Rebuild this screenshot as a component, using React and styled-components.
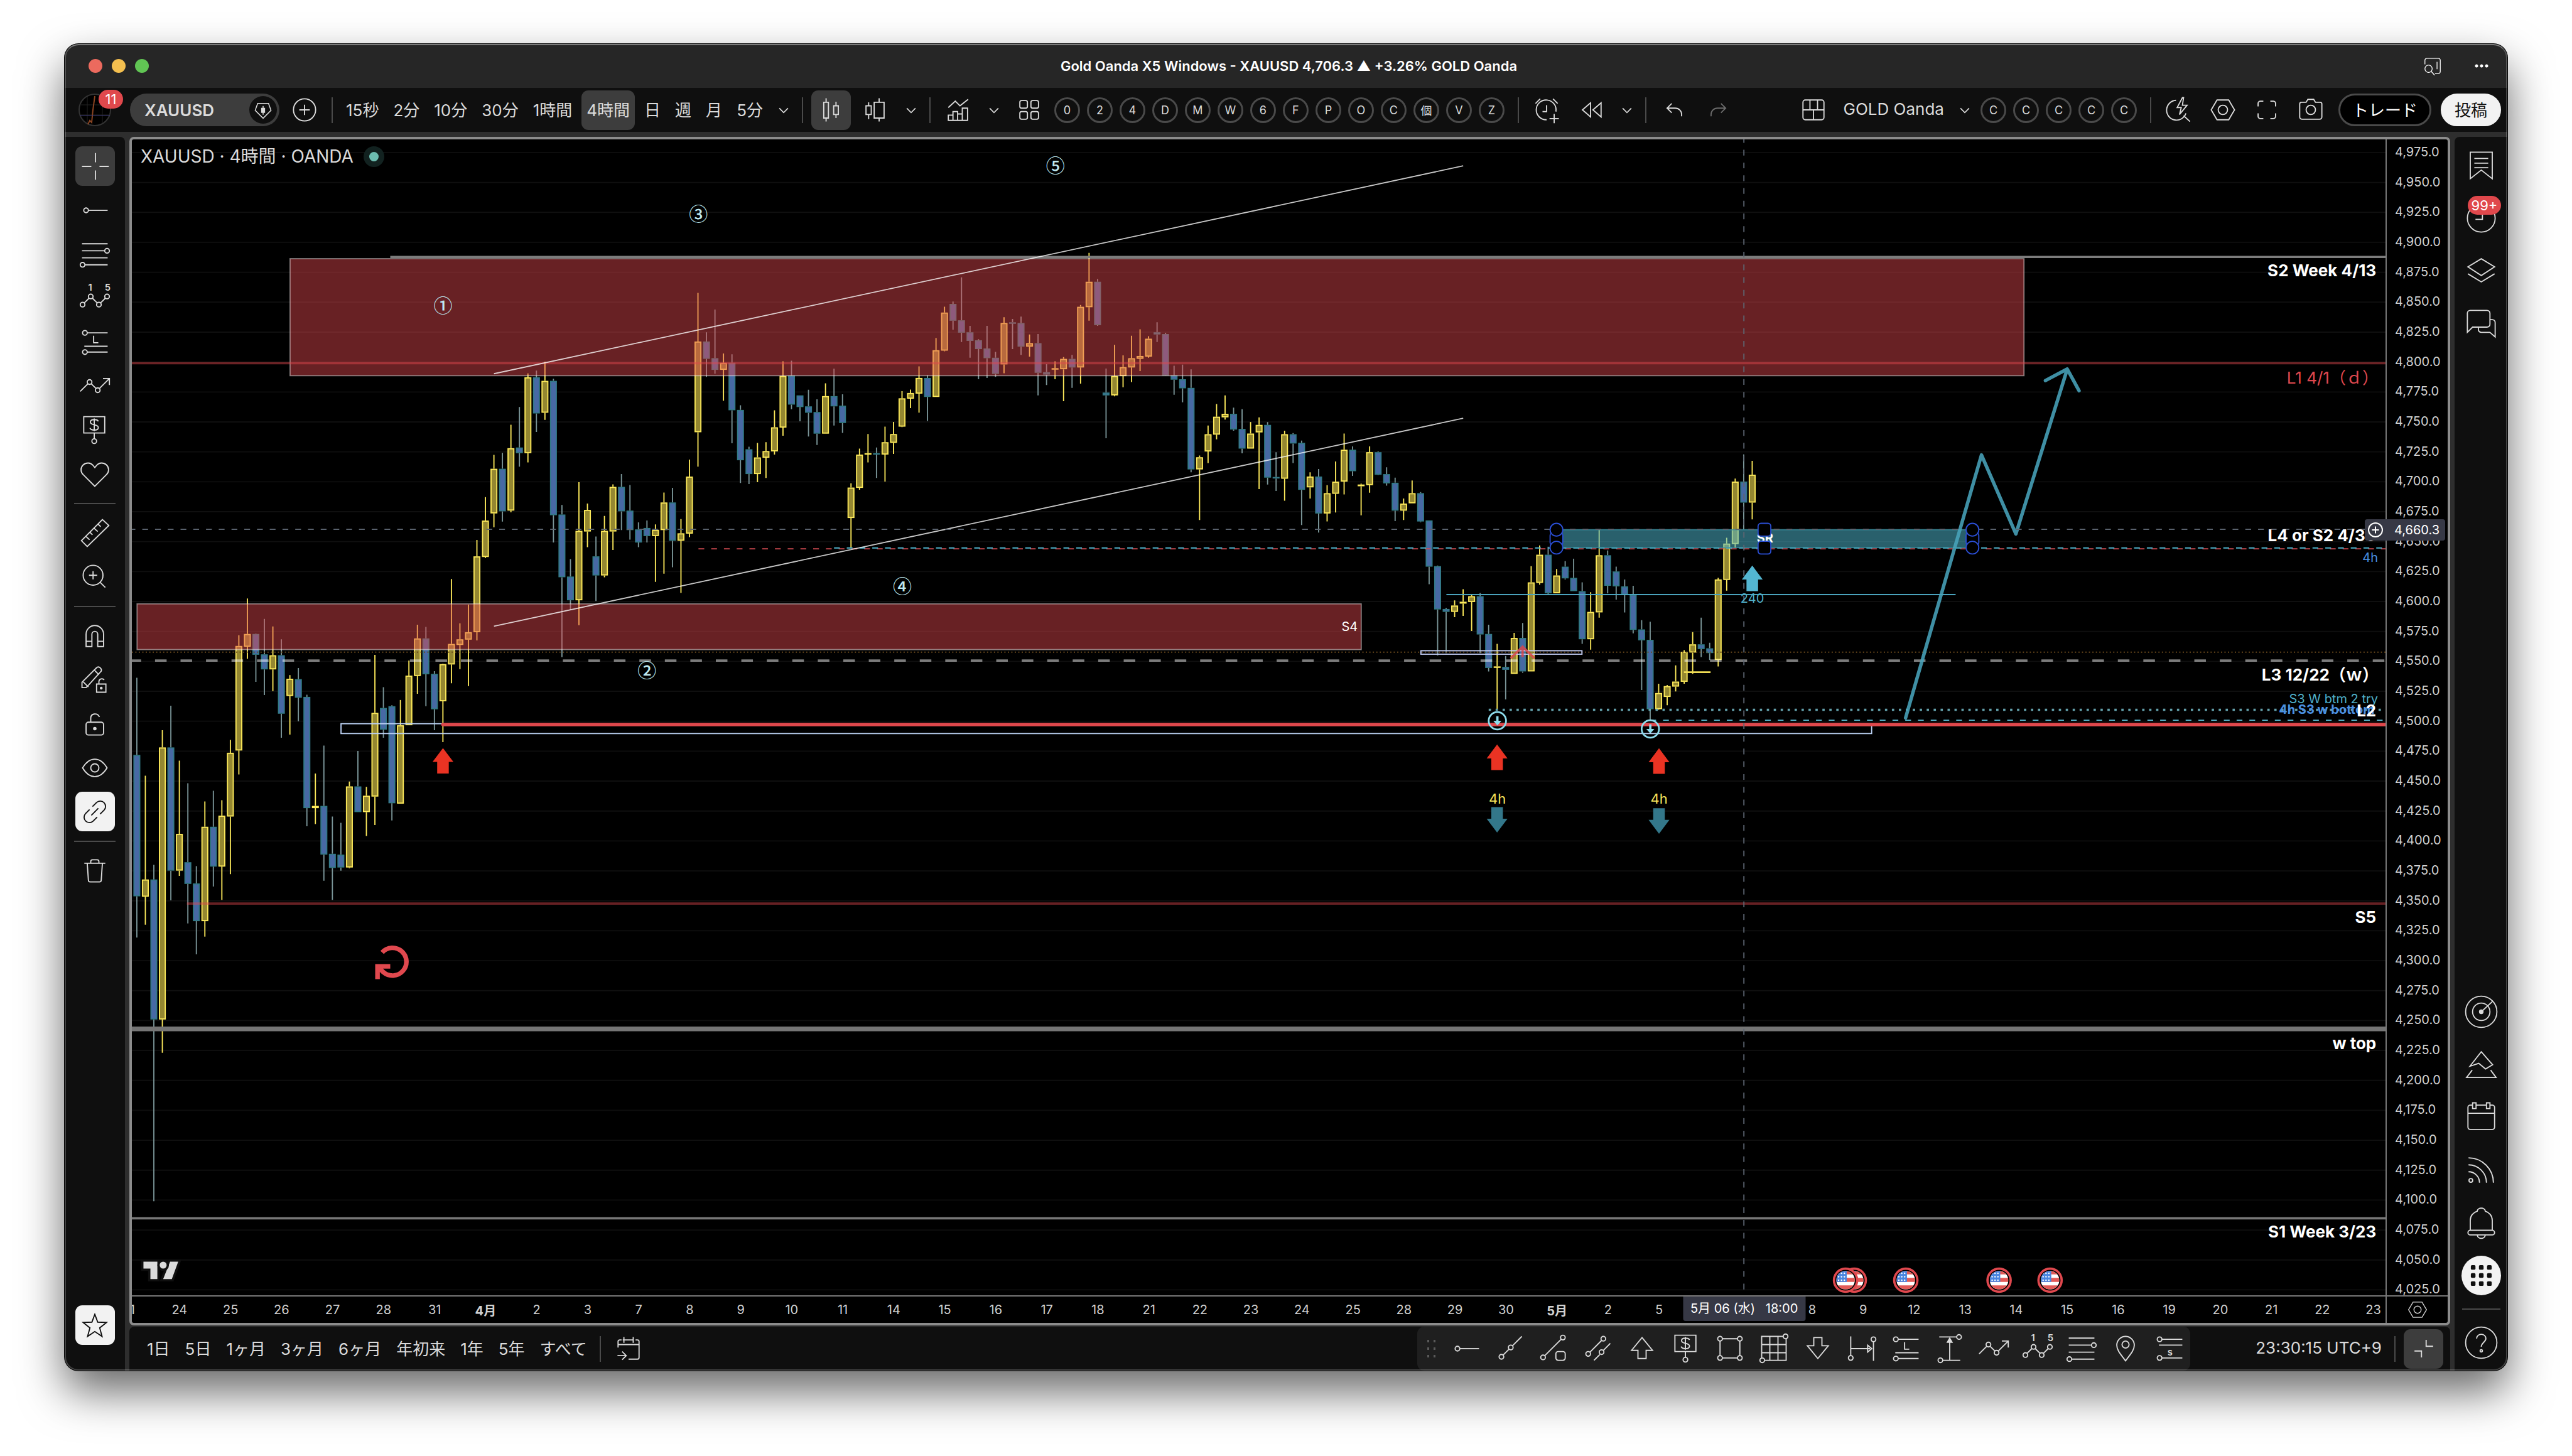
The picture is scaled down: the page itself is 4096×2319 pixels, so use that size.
import React from 'react'
import styled, { createGlobalStyle, css } from 'styled-components'

// ------------ chart geometry ------------ //

const PLOT = { x: 228, y: 240, w: 3890, h: 1996 }
const FIRST_BAR = 236.6
const BAR_STEP = 14.675

const xPct = x => `${((x - PLOT.x) / PLOT.w) * 100}%`
const yPct = y => `${((y - PLOT.y) / PLOT.h) * 100}%`
const priceY = price => 262.7 + (4975 - price) * 2.0674

// each block: [origin, rows per unit, bars]; a bar is [up, high, top, bottom, low]
const blocks = [
  [980, 1.3067, [
    [0, 248, 422, 741, 834], [1, 469, 703, 742, 805], [0, 670, 703, 1019, 1429], [1, 366, 405, 1019, 1094],
    [0, 311, 405, 683, 750], [1, 435, 600, 683, 695], [0, 486, 664, 713, 802], [0, 673, 712, 797, 872],
    [1, 527, 584, 797, 832], [0, 503, 584, 674, 719], [1, 524, 559, 674, 749], [1, 388, 417, 561, 691],
    [1, 152, 176, 412, 466], [1, 69, 149, 178, 205], [0, 148, 149, 196, 257], [0, 115, 195, 229, 287],
    [1, 132, 197, 229, 278], [0, 161, 197, 329, 383], [1, 242, 250, 289, 376], [0, 226, 251, 293, 346],
    [0, 286, 291, 542, 583], [1, 464, 537, 542, 578], [0, 401, 537, 647, 706], [0, 561, 645, 677, 749],
    [0, 575, 647, 676, 683], [1, 482, 493, 676, 678], [0, 413, 493, 551, 551], [1, 494, 514, 551, 605],
    [1, 196, 327, 516, 580], [0, 269, 316, 365, 383], [0, 310, 312, 531, 570], [1, 298, 355, 532, 532],
    [1, 209, 243, 355, 355], [1, 128, 159, 244, 284], [0, 133, 159, 240, 312], [0, 233, 239, 319, 366],
    [1, 216, 217, 301, 393],
  ]],
  [420, 1.6333, [
    [1, 946, 1129, 1187, 1240], [1, 1071, 1116, 1132, 1200], [1, 1018, 1096, 1117, 1248], [1, 836, 882, 1096, 1119],
    [1, 715, 781, 884, 887], [1, 596, 635, 761, 800], [0, 590, 635, 755, 784], [1, 511, 577, 753, 758],
    [0, 461, 575, 591, 629], [1, 366, 377, 591, 617], [0, 358, 377, 479, 531], [1, 333, 387, 477, 497],
    [0, 381, 387, 766, 843], [0, 737, 764, 941, 1166], [0, 890, 939, 1006, 1033], [1, 673, 810, 1006, 1076],
    [1, 733, 751, 812, 856], [0, 826, 882, 936, 1008], [1, 768, 810, 936, 941], [1, 679, 686, 812, 864],
    [0, 650, 686, 755, 808], [0, 681, 753, 808, 835], [0, 786, 806, 843, 856], [0, 781, 802, 825, 843],
    [1, 792, 807, 825, 954], [1, 702, 730, 808, 931], [0, 689, 730, 838, 913], [1, 777, 817, 838, 985],
    [1, 609, 657, 818, 828], [1, 139, 276, 532, 629], [0, 250, 276, 325, 376], [0, 186, 323, 356, 367],
    [1, 310, 336, 356, 443], [0, 312, 336, 470, 563], [0, 456, 469, 611, 675], [0, 573, 580, 650, 678],
    [1, 562, 603, 650, 673], [1, 560, 585, 604, 661], [1, 470, 518, 586, 595], [1, 332, 373, 519, 542],
    [0, 330, 372, 454, 467], [0, 428, 428, 461, 501], [0, 412, 459, 477, 544], [0, 439, 475, 536, 568],
    [1, 394, 430, 536, 536], [0, 353, 430, 459, 513], [0, 425, 457, 506, 534], [1, 676, 688, 774, 858],
    [1, 578, 595, 689, 694], [1, 537, 591, 595, 617], [0, 575, 591, 595, 661], [1, 516, 560, 595, 671],
    [1, 503, 537, 562, 593],
  ]],
  [420, 2.6133, [
    [1, 666, 698, 826, 828], [1, 659, 674, 700, 742], [1, 554, 606, 677, 763], [0, 594, 606, 692, 800],
    [1, 426, 481, 692, 692], [1, 285, 311, 483, 486], [0, 261, 272, 348, 389], [0, 152, 346, 402, 444],
    [0, 371, 400, 439, 515], [0, 431, 436, 476, 612], [0, 371, 473, 517, 606], [0, 489, 515, 588, 601],
    [1, 332, 358, 545, 585], [0, 340, 355, 360, 476], [0, 329, 358, 465, 502], [1, 410, 449, 465, 510],
    [0, 408, 449, 583, 685], [0, 544, 580, 591, 638], [1, 531, 562, 567, 612], [1, 512, 520, 567, 711],
    [0, 502, 520, 559, 651], [1, 277, 285, 559, 632], [1, 42, 172, 287, 348], [0, 159, 172, 368, 371],
    [0, 564, 672, 685, 878], [1, 457, 597, 685, 689], [1, 504, 557, 598, 648], [1, 416, 517, 559, 625],
    [1, 387, 507, 520, 575], [1, 418, 429, 510, 515], [0, 355, 400, 410, 444], [0, 402, 408, 596, 597],
    [0, 551, 594, 614, 682], [0, 546, 612, 653, 716], [0, 567, 651, 1019, 1032], [1, 956, 964, 1019, 1247],
    [1, 821, 860, 938, 990], [1, 724, 781, 862, 883], [1, 685, 768, 784, 794], [0, 740, 768, 839, 844],
    [0, 747, 836, 925, 946], [1, 805, 857, 925, 925], [1, 784, 818, 852, 1108], [0, 805, 818, 1056, 1087],
    [0, 941, 1053, 1060, 1116], [1, 844, 860, 1061, 1160], [0, 855, 860, 902, 990], [0, 889, 899, 1111, 1270],
    [1, 1032, 1051, 1100, 1150], [0, 1017, 1051, 1218, 1304], [1, 1090, 1126, 1218, 1254], [1, 983, 1074, 1129, 1213],
    [1, 857, 930, 1074, 1132], [0, 915, 930, 1027, 1048], [1, 1083, 1087, 1095, 1226], [1, 915, 941, 1090, 1124],
    [0, 938, 941, 1043, 1045], [0, 1009, 1040, 1082, 1092], [0, 1056, 1079, 1205, 1252], [1, 1150, 1173, 1205, 1247],
    [1, 1069, 1126, 1172, 1172], [0, 1121, 1126, 1254, 1257],
  ]],
  [740, 2.1778, [
    [0, 344, 344, 518, 584], [0, 514, 516, 679, 852], [0, 673, 677, 688, 843], [1, 645, 664, 688, 708],
    [1, 603, 650, 657, 703], [1, 625, 629, 651, 760], [0, 617, 629, 773, 843], [0, 736, 771, 899, 912],
    [1, 808, 893, 897, 1054], [0, 854, 895, 906, 1017], [1, 767, 786, 921, 921], [0, 730, 786, 912, 917],
    [1, 516, 577, 912, 912], [1, 438, 473, 579, 586], [0, 443, 473, 618, 623], [1, 527, 551, 618, 618],
    [0, 497, 518, 562, 566], [0, 488, 560, 610, 610], [0, 577, 610, 791, 808], [1, 614, 688, 791, 830],
    [1, 378, 475, 690, 710], [0, 457, 475, 590, 618], [0, 518, 536, 592, 642], [0, 566, 592, 624, 690],
    [0, 590, 623, 756, 769], [0, 719, 754, 795, 982], [0, 725, 793, 1054, 1096], [1, 958, 993, 1054, 1056],
    [1, 963, 967, 1008, 1039], [1, 889, 950, 969, 987], [1, 832, 838, 951, 958], [1, 764, 810, 841, 921],
    [0, 710, 810, 828, 858], [0, 804, 825, 843, 869], [1, 560, 566, 869, 893], [1, 409, 431, 568, 608],
    [1, 187, 198, 433, 448], [0, 96, 198, 277, 378], [1, 120, 172, 277, 340],
  ]],
]

const candles = blocks
  .flatMap(([origin, rows, bars]) =>
    bars.map(([up, ...ys]) => [up, ...ys.map(v => origin + v / rows)])
  )
  .map(([up, high, top, bottom, low], i) => ({
    up,
    high,
    top,
    bottom,
    low,
    x: FIRST_BAR + i * BAR_STEP,
  }))

const prices = Array.from({ length: 39 }, (_, i) => 4975 - i * 25)
const formatPrice = p => p.toLocaleString('en-US', { minimumFractionDigits: 1 })

// '-' is a tick without a label
const days = (
  '21 24 25 26 27 28 31 4月 2 3 7 8 9 10 11 14 15 16 17 18 21 22 23 24 25 ' +
  '28 29 30 5月 2 5 - - 8 9 12 13 14 15 16 19 20 21 22 23'
).split(' ')

// ------------ icons ------------ //

const dot = (x, y, r = 2) => <circle cx={x} cy={y} r={r} />

const waveShape = (
  <>
    <path d="M5 18l4-4M12 14l4 4M19 18l4-4" />
    {dot(3.5, 19.5)}
    {dot(10.5, 12.5)}
    {dot(17.5, 19.5)}
    {dot(24.5, 12.5)}
    <IconText x="10" y="7.5">1</IconText>
    <IconText x="25" y="7.5">5</IconText>
  </>
)

const priceNoteShape = (
  <>
    <path d="M4.5 2.5h18v14h-18zM13.5 16.5v5" />
    {dot(13.5, 23.5)}
    <path d="M17 6.500c-.500-1-1.800-1.500-3.500-1.500-2 0-3.300.800-3.300 2.200 0 3.200 6.800 1.300 6.800 4.600 0 1.500-1.500 2.200-3.500 2.200-1.800 0-3.200-.600-3.700-1.800M13.500 4v11" />
  </>
)

const icons = {
  cross: <path d="M14.500 2.500v8M14.500 17.500v8M3 14h8M18 14h8" />,
  ray: <>{dot(6.5, 14)}<path d="M8.500 14H25" /></>,
  fib: (
    <>
      <path d="M3 5h22M3 11h19.500M3 17h22M5.500 23H25" />
      {dot(24.5, 11)}
      {dot(3.5, 23)}
    </>
  ),
  wave: waveShape,
  longPos: (
    <>
      {dot(5.5, 6)}
      {dot(5.5, 22.5)}
      <path d="M7.500 6H25M5 17.500h20M7.500 22.500H25M13 8.500v6h4" />
    </>
  ),
  shortPos: (
    <>
      {dot(5.5, 6)}
      {dot(5.5, 22)}
      <path d="M7.500 6H25M5 11h20M7.500 22H25" />
      <IconText x="14.5" y="20">s</IconText>
    </>
  ),
  path: (
    <>
      <path d="M1.500 18.500l6.500-6.500M11 12l4 4M18 16l8.500-8.500M21 7.500h5.500V13" />
      {dot(9.5, 10.5)}
      {dot(16.5, 17.5)}
    </>
  ),
  note: priceNoteShape,
  heart: (
    <path d="M14 24.500L4 14.500C1.500 12 1.700 8.300 4 6.200c2.600-2.400 6.500-2 8.500.4L14 8.500l1.500-1.900c2-2.400 5.900-2.800 8.500-.4 2.300 2.100 2.500 5.800 0 8.300z" />
  ),
  ruler: (
    <path d="M2.500 20.500L20.500 2.500l5.500 5-18.500 18zM6.500 17l3 2.700M10 13.500l2 2M13.500 10l3 2.700M17 6.500l2 2" />
  ),
  zoom: (
    <>
      {dot(12.5, 12.5, 8.5)}
      <path d="M18.500 18.500l4.500 4.500M9 12.500h7M12.500 9v7" />
    </>
  ),
  magnet: (
    <path d="M6.500 23V12.500a7.500 7.500 0 0 1 15 0V23h-5V12.500a2.500 2.500 0 0 0-5 0V23zM6.500 18.500h5M16.500 18.500h5" />
  ),
  pencilLock: (
    <>
      <path d="M3 20.500v-4.500L15.500 3.500a2 2 0 0 1 3 0l.5.500a2 2 0 0 1 0 3L9 18l-2.500 2.500zM4 15.500l4.500 4.500M13.500 5.500l4 4" />
      <path d="M15.500 17.500h8v7h-8zM17.500 17.500v-2a2.500 2.500 0 0 1 4.500-1.500" />
      <circle cx="19.500" cy="21" r=".7" fill="currentColor" />
    </>
  ),
  lock: (
    <>
      <rect x="6.500" y="12.500" width="15" height="11" rx="2" />
      <path d="M10.500 12.500V9c0-4 5.500-5 7.500-1" />
      <circle cx="14" cy="18" r="1" fill="currentColor" />
    </>
  ),
  eye: (
    <>
      <path d="M3.500 14C6.500 9 10 6.500 14 6.500S21.500 9 24.500 14C21.500 19 18 21.500 14 21.500S6.500 19 3.500 14z" />
      {dot(14, 14, 3.5)}
    </>
  ),
  link: (
    <path d="M9.500 12L6 15.500a4.600 4.600 0 0 0 6.500 6.500l3.500-3.500M12 9.500L15.500 6A4.600 4.600 0 0 1 22 12.500L18.500 16M11 17l6-6" />
  ),
  trash: (
    <path d="M5 7.500h18M10.500 7.500v-1.500c0-1 .8-1.500 1.500-1.500h4c.7 0 1.500.5 1.500 1.500v1.500M7.500 7.500l1 14.500c0 1 .8 1.500 1.500 1.500h8c.7 0 1.500-.5 1.500-1.500l1-14.500" />
  ),
  star: (
    <path d="M14 4.500l2.500 6.700 7.500.3-5.800 4.600 2 7.400-6.200-4.200-6.200 4.200 2-7.400L4 11.500l7.500-.3z" />
  ),
  nib: (
    <>
      <path d="M8.500 7.500h11l2.500 7-8 8-8-8z" />
      <path d="M14 10v9M12.500 12.500h3v4h-3z" fill="currentColor" />
    </>
  ),
  add: <>{dot(14, 14, 9.5)}<path d="M14 9.500v9M9.500 14h9" /></>,
  chevron: <path d="M10 12.500l4 4 4-4" />,
  candles: (
    <path d="M8 7.500h4v13.500H8zM10 4v3.500M10 21v3M16.500 10.500h4v7.500h-4zM18.500 7v3.500M18.500 18v3" />
  ),
  candlesAlt: (
    <path d="M6 10.500h4.500v7.500H6zM8.250 7.500v3M8.250 18v4M13 7.500h8.500v13.500H13zM17.250 4v3.500M17.250 21v3" />
  ),
  indicators: (
    <path d="M5.500 12l6-5.500 4 4 7-5.500M5.500 18.500h4v4.500h-4zM9.500 18.500v-3h4v7.500h-4M13.500 17.500h4v5.500h-4M17.500 12.500h4.500V23h-4.500z" />
  ),
  tiles: (
    <>
      <rect x="6" y="6" width="6.500" height="6.500" rx="1.500" />
      <rect x="15.500" y="6" width="6.500" height="6.500" rx="1.500" />
      <rect x="6" y="15.500" width="6.500" height="6.500" rx="1.500" />
      <rect x="15.500" y="15.500" width="6.500" height="6.500" rx="1.500" />
    </>
  ),
  alarm: (
    <path d="M14 22.500a8.500 8.500 0 1 1 8-7M4.500 8.500l4-4M23.500 8.500l-4-4M14 10v5.500h-3.500M20.500 17.500v8M16.500 21.500h8" />
  ),
  replay: <path d="M13.500 8v12L6.500 14zM22.500 8v12L15.500 14z" />,
  undo: <path d="M12 8.500l-4 4 4 4M8 12.500h7a5.500 5.500 0 0 1 5.500 5.500v1.500" />,
  redo: <path d="M16 8.500l4 4-4 4M20 12.500h-7A5.500 5.500 0 0 0 7.500 18v1.500" />,
  layout: (
    <>
      <rect x="5" y="5.500" width="18" height="17" rx="2" />
      <path d="M5 14h18M11 5.500V14M17.500 5.500V14M14 14v8.500" />
    </>
  ),
  flash: (
    <path d="M11.500 5.800A8.500 8.500 0 1 0 20 17M18 19l5.500 5M17 3.500l-4.500 8.500h3.500l-1.500 6 6.500-8h-4l1-6.500z" />
  ),
  hex: <><path d="M9 5.500h10l5 8.500-5 8.500H9L4 14z" />{dot(14, 14, 4)}</>,
  full: (
    <path d="M6.500 11V8.500a2 2 0 0 1 2-2H11M17 6.500h2.500a2 2 0 0 1 2 2V11M21.500 17v2.500a2 2 0 0 1-2 2H17M11 21.500H8.500a2 2 0 0 1-2-2V17" />
  ),
  camera: (
    <>
      <path d="M6 7.500h4l1.500-2.500h5l1.500 2.500h4A1.500 1.500 0 0 1 23.500 9v11a2 2 0 0 1-2 2h-15a2 2 0 0 1-2-2V9A1.500 1.500 0 0 1 6 7.500z" />
      {dot(14, 14, 4)}
    </>
  ),
  range: (
    <path d="M8 6.500H6.500a1.500 1.500 0 0 0-1.500 1.500v5M20 6.500h1.500a1.500 1.500 0 0 1 1.500 1.500v13.500a1.500 1.500 0 0 1-1.500 1.500H14M5 10.500h18M10 4v5M18 4v5M9 6.500h9M4.500 20h7M8.500 16.500l3.500 3.500-3.500 3.500" />
  ),
  trend: <>{dot(6.5, 21)}{dot(14.5, 13)}<path d="M8 19.500l5-5M16 11.500l8-8" /></>,
  trendBox: (
    <>
      {dot(4.5, 21.5)}
      {dot(21.5, 4.5)}
      <path d="M6 20L20 6" />
      <rect x="15.500" y="16.500" width="8" height="7.500" rx="2" />
    </>
  ),
  channel: (
    <>
      {dot(5.5, 18.5)}
      {dot(18.5, 5.5)}
      {dot(17, 17)}
      <path d="M7 17L17 7M10.500 24l5-5M18.500 15.500l6-6" />
    </>
  ),
  arrowUp: <path d="M14 4.500l9 11h-5.500V22.500h-7v-7H5z" />,
  arrowDown: <path d="M14 22.500l9-11h-5.500V4.500h-7v7H5z" />,
  rect: (
    <>
      <path d="M7.500 5.500h13M7.500 22h13M5.500 7.500V20M22.500 7.500V20" />
      {dot(5.5, 5.5)}
      {dot(22.5, 5.5)}
      {dot(5.5, 22)}
      {dot(22.5, 22)}
    </>
  ),
  mesh: (
    <>
      <path d="M3.500 22V3.500H22M24.500 5.500V24H6M10.500 3.500V24M17.500 3.500V24M3.500 10.500h21M3.500 17.500h21" />
      {dot(24, 3.5)}
      {dot(4, 24)}
    </>
  ),
  dateRange: (
    <>
      <path d="M4.500 3.500v16.500M24 8v16.500M4.500 14H21M19 11l3.500 3-3.500 3z" />
      {dot(4.5, 22)}
      {dot(24, 6)}
    </>
  ),
  priceRange: (
    <>
      <path d="M5 4h15M8 24h15M14 24V7" />
      <path d="M12 8.500L14 5l2 3.500z" fill="currentColor" />
      {dot(22, 4)}
      {dot(6, 24)}
    </>
  ),
  pin: (
    <>
      <path d="M14 24.500c-4-5.500-7.500-9-7.500-13.500a7.500 7.500 0 0 1 15 0c0 4.500-3.500 8-7.500 13.500z" />
      {dot(14, 10.5, 3)}
    </>
  ),
  collapse: <path d="M16 6.500V12h6M6 16h6v5.500" />,
  tab: (
    <path d="M4.500 12V7a2.500 2.500 0 0 1 2.500-2.500h14A2.500 2.500 0 0 1 23.500 7v14a2.500 2.500 0 0 1-2.500 2.500h-4M19.500 9v9M9 22a4.500 4.500 0 1 1 0-9 4.500 4.500 0 0 1 0 9zM12.500 21l4 4.500" />
  ),
}

// right side icons use a 32 unit box
const sideIcons = {
  list: (
    <path d="M6.500 4.500h19v23L16 20l-9.500 7.500zM10 10h12M10 14h12M10 18h12" />
  ),
  clock: <>{dot(16, 16, 12)}<path d="M17 9v8h-6" /></>,
  layers: <path d="M16 5.500l11.500 7L16 20 4.500 12.500zM4.500 18.500L16 25.500l11.500-7" />,
  chat: (
    <path d="M6.500 4.500h14.500a2.500 2.500 0 0 1 2.500 2.500v9.500a2.500 2.500 0 0 1-2.500 2.500H8.500L4 23.500V7a2.500 2.500 0 0 1 2.500-2.500zM13.500 19v2a2.500 2.500 0 0 0 2.500 2.500h7.500l4.500 4V15a2.500 2.500 0 0 0-2.500-2.500h-2" />
  ),
  radar: (
    <>
      {dot(16, 16, 13.5)}
      {dot(16, 16, 7.5)}
      <circle cx="16" cy="16" r="1.500" fill="currentColor" />
      <path d="M16 16l9.800-9" />
    </>
  ),
  peaks: (
    <path d="M6.200 17.500L16 5l9.800 11.200-6.100 3.600L13.800 15zM8.200 20.800l-4.900 6.400h25.500l-4.700-6.400" />
  ),
  calendar: (
    <path d="M8 5.500H6.500a2 2 0 0 0-2 2v17a2 2 0 0 0 2 2h19a2 2 0 0 0 2-2v-17a2 2 0 0 0-2-2H24M12 5.500h8M4.500 12.500h23M8.500 3.500h3v5h-3zM20.500 3.500h3v5h-3z" />
  ),
  feed: (
    <>
      <path d="M5 5.500A21.500 21.500 0 0 1 26.500 27M5 11.500A15.500 15.500 0 0 1 20.500 27M5 17.500A9.500 9.500 0 0 1 14.500 27" />
      {dot(7, 25, 1.6)}
    </>
  ),
  bell: (
    <path d="M6.500 22.500V14c0-4 2.500-7 6-8 .3-3.500 6.700-3.500 7 0 3.500 1 6 4 6 8v8.500M6.500 22.500h19a2 2 0 0 1 0 4h-19a2 2 0 0 1 0-4zM12.500 26.500c.5 4 6.500 4 7 0" />
  ),
  apps: (
    <g fill="currentColor" stroke="none">
      {[7, 14, 21].flatMap(y =>
        [7, 14, 21].map(x => (
          <rect key={`${x}-${y}`} x={x} y={y} width="4" height="4" rx="1" />
        ))
      )}
    </g>
  ),
  help: (
    <>
      {dot(16, 16, 13.5)}
      <path d="M12 12.500c0-5 8-5 8 0 0 3-4 3.500-4 7" />
      {dot(16, 23, 1)}
    </>
  ),
}

function IconText({ x, y, children }) {
  return (
    <text x={x} y={y} fontSize="8" fontWeight="600" textAnchor="middle" fill="currentColor" stroke="none">
      {children}
    </text>
  )
}

const Icon = ({ name, size = 52 }) => (
  <Glyph viewBox="0 0 28 28" width={size} height={size} aria-hidden="true">
    {icons[name]}
  </Glyph>
)

const SideIcon = ({ name }) => (
  <Glyph viewBox="0 0 32 32" width="59" height="59" aria-hidden="true">
    {sideIcons[name]}
  </Glyph>
)

// ------------ chart drawing ------------ //

const HLine = ({ y, from = 228, to = 4118, ...rest }) => (
  <line x1={from} x2={to} y1={y} y2={y} {...rest} />
)

const Candle = ({ c }) => (
  <g>
    <path
      d={`M${c.x} ${c.high}V${c.top}M${c.x} ${c.bottom}V${c.low}`}
      stroke={c.up ? '#fdea5b' : '#7b9699'}
      strokeWidth="2"
    />
    <rect
      x={c.x - 5}
      y={c.top + 1}
      width="10"
      height={Math.max(c.bottom - c.top - 2, 0.6)}
      fill={c.up ? '#948731' : '#4769a4'}
      stroke={c.up ? '#fdea5b' : '#327a86'}
      strokeWidth="2"
    />
  </g>
)

const BlockArrow = ({ x, y, color, down }) => (
  <path
    d={
      down
        ? `M${x} ${y + 44}l18-24h-8v-20h-20v20h-8z`
        : `M${x} ${y}l18 24h-8v20h-20v-20h-8z`
    }
    fill={color}
  />
)

const CircleArrow = ({ x, y }) => (
  <g stroke="#8edcec" strokeWidth="3" fill="none">
    <circle cx={x} cy={y} r="15" />
    <path d={`M${x} ${y - 8}v9`} strokeWidth="4" />
    <path d={`M${x - 7} ${y}h14l-7 8z`} fill="#8edcec" stroke="none" />
  </g>
)

const Flag = ({ x }) => (
  <g>
    <circle cx={x} cy="2210" r="20" fill="#000" stroke="#e0484e" strokeWidth="4" />
    <g clipPath="url(#flagClip)" transform={`translate(${x} 2210)`}>
      <rect x="-16" y="-16" width="32" height="32" fill="#fff" />
      <path d="M-16-16h32v6h-32zM-16-4h32v7h-32zM-16 9h32v7h-32z" fill="#e25a57" />
      <rect x="-16" y="-16" width="18" height="19" fill="#4a86e0" />
      <g fill="#fff">
        {[-11, -5, 1].flatMap(sy =>
          [-12, -7, -2].map(sx => <circle key={`${sx}${sy}`} cx={sx} cy={sy - 1} r="1.300" />)
        )}
      </g>
    </g>
  </g>
)

const Zone = props => (
  <rect fill="rgba(226,72,78,0.46)" stroke="rgba(255,255,255,0.45)" strokeWidth="2" {...props} />
)

const corner = { r: 11, fill: '#000', stroke: '#2b4fd6', strokeWidth: 2 }
const knob = { width: 22, height: 22, rx: 5, fill: '#000', stroke: '#2b4fd6', strokeWidth: 2 }

const Drawings = () => (
  <Canvas viewBox={`${PLOT.x} ${PLOT.y} ${PLOT.w} ${PLOT.h}`} preserveAspectRatio="none" aria-hidden="true">
    <defs>
      <clipPath id="flagClip">
        <circle r="16" />
      </clipPath>
    </defs>
    {prices.map(p => (
      <HLine key={p} y={priceY(p)} stroke="#0f0f0f" strokeWidth="2" />
    ))}

    {candles.map(c => (
      <Candle key={c.x} c={c} />
    ))}

    {/* levels */}
    <HLine y={443} from={674} stroke="#7c7c7c" strokeWidth="4" />
    <HLine y={1776} stroke="#757575" strokeWidth="8" />
    <HLine y={2103} stroke="#777" strokeWidth="4" />
    <Zone x="501" y="446" width="2993" height="202" />
    <Zone x="237" y="1042" width="2113" height="79" />
    <HLine y={626.5} stroke="#e2484e" strokeOpacity=".48" strokeWidth="4" />
    <HLine y={1559.5} from={323} stroke="#e2484e" strokeOpacity=".45" strokeWidth="4" />
    <HLine y={1125.5} stroke="#6b4a1c" strokeWidth="2" strokeDasharray="2 4" />
    <HLine y={1140} from={224} stroke="#fff" strokeOpacity=".48" strokeWidth="4" strokeDasharray="20 24" />
    <HLine y={947} from={1206} stroke="#ce4a50" strokeWidth="2" strokeDasharray="10 12" />
    <HLine y={945.5} from={1440} stroke="#4fb3cc" strokeWidth="2" strokeDasharray="10 12" />
    <path d="M853 644.700L2526 285.700M853 1080.600L2526 721.600" stroke="#fff" strokeOpacity=".78" strokeWidth="2" />
    <rect x="589" y="1249" width="2642" height="17" fill="none" stroke="#bcd2f5" strokeWidth="2" />
    <HLine y={1250.5} from={765} stroke="#e0484c" strokeWidth="6" strokeLinecap="round" />
    <rect x="2453" y="1123" width="278" height="6" fill="none" stroke="#c3cdf5" strokeWidth="2" />
    <path d="M2608 1136l20.500-20 20.500 20M2628.500 1116v18" stroke="#d8484e" strokeOpacity=".85" strokeWidth="4" fill="none" />
    <HLine y={1160} from={2907} to={2953} stroke="#f0dd55" strokeWidth="3" />
    <HLine y={1225} from={2570} stroke="#63a0ab" strokeWidth="4" strokeDasharray="4 8" />
    <HLine y={1243} from={2849} stroke="#55b4cc" strokeWidth="2" strokeDasharray="10 12" />
    <HLine y={1026} from={2497} to={3376} stroke="#4aa3bd" strokeWidth="2" />

    {/* selected box */}
    <rect x="2687" y="914" width="718" height="31" fill="#4fb9d0" fillOpacity=".52" stroke="#3d93a4" strokeOpacity=".8" strokeWidth="2" />
    <path
      d="M3289.600 1239L3420.600 785 3480 921.300 3568.600 637M3531 656.500l37.600-20 20.400 37.500"
      fill="none"
      stroke="#48a3bb"
      strokeOpacity=".88"
      strokeWidth="6"
      strokeLinecap="round"
      strokeLinejoin="round"
    />

    {/* markers */}
    <BlockArrow x={765} y={1291} color="#ea3323" />
    <BlockArrow x={2584.5} y={1285} color="#ea3323" />
    <BlockArrow x={2864} y={1291.5} color="#ea3323" />
    <BlockArrow x={3025} y={976} color="#53b6d2" />
    <BlockArrow x={2584.5} y={1393} color="#33778a" down />
    <BlockArrow x={2864} y={1395} color="#33778a" down />
    <CircleArrow x={2585} y={1244} />
    <CircleArrow x={2849} y={1258} />
    <path
      d="M660 1644a24 24 0 1 1 2 34l-9-9M674 1668h-22v22"
      fill="none"
      stroke="#e0484e"
      strokeWidth="8"
    />

    {/* crosshair */}
    <HLine y={913.5} from={224} stroke="#5d6672" strokeWidth="2" strokeDasharray="10 12" />
    <line x1="3010.500" x2="3010.500" y1="236" y2="2236" stroke="#5d6672" strokeWidth="2" strokeDasharray="10 12" />

    {[3201, 3186, 3290, 3451, 3539].map(x => (
      <Flag key={x} x={x} />
    ))}
    <g fill="#dbdbdb" stroke="#0f0f0f" strokeWidth="8" paintOrder="stroke">
      <path d="M248 2178h24v30h-12v-18h-12zM294 2178h14l-11 30h-15z" />
      <circle cx="282" cy="2184" r="6" />
    </g>
  </Canvas>
)

const Handles = () => (
  <Canvas viewBox={`${PLOT.x} ${PLOT.y} ${PLOT.w} ${PLOT.h}`} preserveAspectRatio="none" aria-hidden="true">
    <rect x="2676" y="919" {...knob} />
    <rect x="3394" y="919" {...knob} />
    {[2687, 3405].flatMap(x =>
      [914, 945].map(y => <circle key={`${x}-${y}`} cx={x} cy={y} {...corner} />)
    )}
    <rect x="3035" y="903" {...knob} />
    <rect x="3035" y="934" {...knob} />
  </Canvas>
)

// right aligned labels, anchored to their right edge
const lineLabels = [
  { text: 'S2 Week 4/13', x: 4102, y: 468, bold: true },
  { text: 'L1 4/1（ｄ）', x: 4106, y: 651, color: '#e0484e' },
  { text: 'L4 or S2 4/30', x: 4102, y: 925, bold: true },
  { text: '4h', x: 4105, y: 963, color: '#4a90e2', small: true },
  { text: 'L3 12/22（ｗ）', x: 4106, y: 1164, bold: true },
  { text: 'S3 W btm 2 try', x: 4105, y: 1207, color: '#4fb0ca', small: true },
  { text: '4h S3 w bottom', x: 4099, y: 1226, color: '#4a90e2', small: true, bold: true },
  { text: 'L2', x: 4102, y: 1228, bold: true },
  { text: 'S5', x: 4102, y: 1584, bold: true },
  { text: 'w top', x: 4102, y: 1802, bold: true },
  { text: 'S1 Week 3/23', x: 4102, y: 2128, bold: true },
  { text: 'S4', x: 2344, y: 1082, small: true },
]

const marks = [
  { text: '①', x: 765, y: 526 },
  { text: '②', x: 1117, y: 1156 },
  { text: '③', x: 1206, y: 368 },
  { text: '④', x: 1558, y: 1011 },
  { text: '⑤', x: 1822, y: 284 },
]

const leftTools = [
  'cross', 'ray', 'fib', 'wave', 'longPos', 'path', 'note', 'heart', '-',
  'ruler', 'zoom', '-', 'magnet', 'pencilLock', 'lock', 'eye', 'link', '-', 'trash',
]
const favorites = [
  'ray', 'trend', 'trendBox', 'channel', 'arrowUp', 'note', 'rect', 'mesh', 'arrowDown',
  'dateRange', 'longPos', 'priceRange', 'path', 'wave', 'fib', 'pin', 'shortPos',
]
const intervals = ['15秒', '2分', '10分', '30分', '1時間', '4時間', '日', '週', '月', '5分']
const templates = ['0', '2', '4', 'D', 'M', 'W', '6', 'F', 'P', 'O', 'C', '個', 'V', 'Z']
const spans = ['1日', '5日', '1ヶ月', '3ヶ月', '6ヶ月', '年初来', '1年', '5年', 'すべて']

const App = () => (
  <>
    <GlobalStyle />
    <Desktop>
      <Window>
        <TitleBar>
          <Lights>
            <Light $color="#ec6a5e" />
            <Light $color="#f4bf4f" />
            <Light $color="#61c554" />
          </Lights>
          <Title>Gold Oanda X5 Windows - XAUUSD 4,706.3 ▲ +3.26% GOLD Oanda</Title>
          <TitleActions>
            <Icon name="tab" size={36} />
            <Dots />
          </TitleActions>
        </TitleBar>

        <Toolbar>
          <Avatar>
            <svg viewBox="0 0 52 52" width="52" height="52" aria-hidden="true">
              <circle cx="26" cy="26" r="25" fill="#000" stroke="#333" strokeWidth="2" />
              <path d="M4 18h44M2 34h48M14 5v42M38 5v42" stroke="#222" fill="none" />
              <path d="M15 49l3-6 3 3 2-20 3-22" stroke="#8a4422" strokeWidth="2" fill="none" />
              <path d="M2 35h48" stroke="#3f3d7a" />
            </svg>
            <Badge>11</Badge>
          </Avatar>
          <SymbolButton>
            XAUUSD
            <NibCircle>
              <Icon name="nib" size={44} />
            </NibCircle>
          </SymbolButton>
          <ToolButton aria-label="Add">
            <Icon name="add" />
          </ToolButton>
          <Divider />
          <Row>
            {intervals.map(t => (
              <TextButton key={t} $active={t === '4時間'}>
                {t}
              </TextButton>
            ))}
          </Row>
          <ChevronButton aria-label="Intervals">
            <Icon name="chevron" size={48} />
          </ChevronButton>
          <Divider />
          <ToolButton $active aria-label="Candles">
            <Icon name="candles" />
          </ToolButton>
          <ToolButton aria-label="Hollow candles">
            <Icon name="candlesAlt" />
          </ToolButton>
          <ChevronButton aria-label="Chart types">
            <Icon name="chevron" size={48} />
          </ChevronButton>
          <Divider />
          <ToolButton aria-label="Indicators">
            <Icon name="indicators" />
          </ToolButton>
          <ChevronButton aria-label="Favourite indicators">
            <Icon name="chevron" size={48} />
          </ChevronButton>
          <ToolButton aria-label="Templates">
            <Icon name="tiles" />
          </ToolButton>
          <Rings>
            {templates.map(t => (
              <Ring key={t}>{t}</Ring>
            ))}
          </Rings>
          <WideDivider />
          <ToolButton aria-label="Alert">
            <Icon name="alarm" />
          </ToolButton>
          <ToolButton aria-label="Replay">
            <Icon name="replay" />
          </ToolButton>
          <ChevronButton aria-label="Replay options">
            <Icon name="chevron" size={48} />
          </ChevronButton>
          <Divider />
          <ToolButton aria-label="Undo">
            <Icon name="undo" />
          </ToolButton>
          <ToolButton $dim aria-label="Redo">
            <Icon name="redo" />
          </ToolButton>
          <Spacer />
          <ToolButton aria-label="Layout">
            <Icon name="layout" />
          </ToolButton>
          <TextButton>GOLD Oanda</TextButton>
          <ChevronButton aria-label="Layouts">
            <Icon name="chevron" size={48} />
          </ChevronButton>
          <Rings>
            {[1, 2, 3, 4, 5].map(n => (
              <Ring key={n}>C</Ring>
            ))}
          </Rings>
          <WideDivider />
          <Row>
            {['flash', 'hex', 'full', 'camera'].map(n => (
              <ToolButton key={n} aria-label={n}>
                <Icon name={n} />
              </ToolButton>
            ))}
          </Row>
          <PillRow>
            <Pill>トレード</Pill>
            <Pill $light>投稿</Pill>
          </PillRow>
        </Toolbar>

        <Body>
          <LeftBar>
            {leftTools.map((n, i) =>
              n === '-' ? (
                <Rule key={i} />
              ) : (
                <ToolButton key={n} aria-label={n} $active={n === 'cross'} $light={n === 'link'}>
                  <Icon name={n} />
                </ToolButton>
              )
            )}
            <Spacer />
            <ToolButton $light aria-label="Favourites">
              <Icon name="star" />
            </ToolButton>
          </LeftBar>

          <Center>
            <ChartFrame>
              <Plot>
                <Drawings />
                {lineLabels.map(l => (
                  <LineLabel key={l.text} $x={l.x} $y={l.y} $color={l.color} $small={l.small} $bold={l.bold}>
                    {l.text}
                  </LineLabel>
                ))}
                {marks.map(m => (
                  <Mark key={m.text} $x={m.x} $y={m.y}>
                    {m.text}
                  </Mark>
                ))}
                <Note $x={2585} $y={1379} $color="#f5e35b" $size={22}>4h</Note>
                <Note $x={2864} $y={1380} $color="#f5e35b" $size={22}>4h</Note>
                <Note $x={3025} $y={1034} $color="#4fb0ca" $size={20}>240</Note>
                <Note $x={3047} $y={930} $color="#fff" $size={20} $bold>SR</Note>
                <Handles />
                <Legend>
                  XAUUSD · 4時間 · OANDA
                  <Status />
                </Legend>
              </Plot>
              <PriceAxis>
                <PriceTicks>
                  {prices.map(p => (
                    <span key={p}>{formatPrice(p)}</span>
                  ))}
                </PriceTicks>
                <PriceTag>
                  <svg viewBox="0 0 28 28" width="28" height="28" fill="none" stroke="#fff" strokeWidth="2" aria-hidden="true">
                    <circle cx="14" cy="14" r="11" />
                    <path d="M14 8.500v11M8.500 14h11" />
                  </svg>
                  <span>4,660.3</span>
                </PriceTag>
              </PriceAxis>
              <TimeAxis>
                <DayTicks>
                  {days.map((d, i) => (
                    <Day key={i} $bold={d.includes('月')}>
                      {d !== '-' && d}
                    </Day>
                  ))}
                </DayTicks>
                <TimeTag>5月 06 (水)&nbsp;&nbsp;&nbsp;18:00</TimeTag>
              </TimeAxis>
              <AxisCorner aria-label="Axis settings">
                <Icon name="hex" size={40} />
              </AxisCorner>
            </ChartFrame>

            <BottomBar>
              <SpanRow>
                {spans.map(s => (
                  <TextButton key={s}>{s}</TextButton>
                ))}
              </SpanRow>
              <Divider />
              <ToolButton aria-label="Go to date">
                <Icon name="range" />
              </ToolButton>
              <Spacer />
              <Favorites>
                <Grip viewBox="0 0 46 52" aria-hidden="true">
                  {[14, 26, 38].flatMap(y =>
                    [16, 26].map(x => <rect key={`${x}-${y}`} x={x} y={y - 2} width="3" height="4" />)
                  )}
                </Grip>
                <Row>
                  {favorites.map(n => (
                    <ToolButton key={n} aria-label={n}>
                      <Icon name={n} />
                    </ToolButton>
                  ))}
                </Row>
              </Favorites>
              <TextButton>23:30:15 UTC+9</TextButton>
              <Divider />
              <ToolButton $active aria-label="Collapse">
                <Icon name="collapse" />
              </ToolButton>
            </BottomBar>
          </Center>

          <RightBar>
            <ToolButton aria-label="Watchlist">
              <SideIcon name="list" />
            </ToolButton>
            <ToolButton aria-label="Alerts">
              <SideIcon name="clock" />
              <SideBadge>99+</SideBadge>
            </ToolButton>
            <ToolButton aria-label="Layers">
              <SideIcon name="layers" />
            </ToolButton>
            <ToolButton aria-label="Chat">
              <SideIcon name="chat" />
            </ToolButton>
            <Spacer />
            {['radar', 'peaks', 'calendar', 'feed', 'bell'].map(n => (
              <ToolButton key={n} aria-label={n}>
                <SideIcon name={n} />
              </ToolButton>
            ))}
            <ToolButton $light $round aria-label="Apps">
              <SideIcon name="apps" />
            </ToolButton>
            <SideRule />
            <ToolButton aria-label="Help">
              <SideIcon name="help" />
            </ToolButton>
          </RightBar>
        </Body>
      </Window>
    </Desktop>
  </>
)

export default App

// <------------ css ------------> //

const GlobalStyle = createGlobalStyle`
  * { box-sizing: border-box; }
  body {
    margin: 0;
    background: #fff;
    color: #dbdbdb;
    font-family: Inter, 'Noto Sans CJK JP', sans-serif;
    font-size: 26px;
  }
  button {
    font: inherit;
    color: inherit;
    background: none;
    border: none;
    padding: 0;
    cursor: pointer;
    white-space: nowrap;
  }
`

const Desktop = styled.div`
  display: flex;
  min-height: 100vh;
  padding: 70px 103px 136px;
`

const Window = styled.div`
  position: relative;
  flex: 1;
  min-width: 0;
  display: flex;
  flex-direction: column;
  border-radius: 22px;
  overflow: hidden;
  background: #2e2e2e;
  box-shadow: 0 0 0 1px #000, 0 33px 70px rgba(0, 0, 0, 0.6);

  &::after {
    content: '';
    position: absolute;
    inset: 0;
    border: 2px solid rgba(255, 255, 255, 0.22);
    border-top-color: rgba(255, 255, 255, 0.4);
    border-radius: 22px;
    pointer-events: none;
  }
`

const Glyph = styled.svg`
  flex: none;
  display: block;
  fill: none;
  stroke: currentColor;
  stroke-width: 1;
`

const TitleBar = styled.header`
  display: grid;
  grid-template-columns: 1fr auto 1fr;
  align-items: center;
  height: 70px;
  padding: 0 29px 0 38px;
  background: #262626;
`

const Lights = styled.div`
  display: flex;
  gap: 15px;
`

const Light = styled.span`
  width: 22px;
  height: 22px;
  border-radius: 50%;
  background: ${p => p.$color};
`

const Title = styled.h1`
  margin: 0;
  color: #fff;
  font-size: 22px;
  font-weight: 600;
`

const TitleActions = styled.div`
  display: flex;
  justify-content: flex-end;
  align-items: center;
  gap: 48px;
  color: #fff;
`

const Dots = styled.span`
  width: 24px;
  height: 6px;
  background: radial-gradient(circle, #fff 2px, transparent 3px) 0 0 / 8px 6px;
`

const Toolbar = styled.div`
  display: flex;
  align-items: center;
  gap: 8px;
  height: 70px;
  padding: 0 10px 0 22px;
  background: #0f0f0f;
`

const Avatar = styled.div`
  position: relative;
  width: 52px;
  height: 52px;
  margin-right: 22px;
`

const Badge = styled.span`
  position: absolute;
  top: -6px;
  left: 32px;
  min-width: 39px;
  padding: 0 6px;
  border-radius: 15px;
  background: #e0484c;
  color: #fff;
  font-size: 22px;
  line-height: 30px;
  text-align: center;
`

const SymbolButton = styled.button`
  display: flex;
  align-items: center;
  justify-content: space-between;
  width: 238px;
  height: 52px;
  && {
    padding: 0 4px 0 23px;
    background: #3d3d3d;
    font-weight: 600;
  }
  border-radius: 26px;
`

const NibCircle = styled.span`
  width: 44px;
  height: 44px;
  border-radius: 50%;
  background: #0f0f0f;
`

const ToolButton = styled.button`
  position: relative;
  flex: none;
  display: flex;
  align-items: center;
  justify-content: center;
  width: 63px;
  height: 63px;
  border-radius: ${p => (p.$round ? '50%' : '11px')};
  ${p => p.$active && css`&& { background: #3d3d3d; }`}
  ${p => p.$light && css`&& { background: #f2f2f2; color: #0f0f0f; }`}
  ${p => p.$dim && css`&& { color: #6b6b6b; }`}
`

const ChevronButton = styled(ToolButton)`
  width: 34px;
`

const TextButton = styled.button`
  flex: none;
  height: 63px;
  border-radius: 11px;
  && {
    padding: 0 8px 3px;
    ${p => p.$active && 'background: #3d3d3d;'}
  }
`

const Row = styled.div`
  display: flex;
  gap: 7px;
`

const Divider = styled.span`
  flex: none;
  width: 2px;
  height: 41px;
  margin: 0 5px 0 4px;
  background: #4a4a4a;
`

const WideDivider = styled(Divider)`
  margin-left: 13px;
`

const Spacer = styled.div`
  flex: 1;
`

const Rings = styled.div`
  display: flex;
  gap: 11px;
`

const Ring = styled.button`
  width: 41px;
  height: 41px;
  border-radius: 50%;
  && {
    border: 3px solid #4a4a4a;
    font-size: 18px;
  }
`

const PillRow = styled.div`
  display: flex;
  gap: 15px;
  margin-left: 4px;
`

const Pill = styled.button`
  height: 52px;
  border-radius: 26px;
  && {
    padding: 0 19px 3px;
    border: 3px solid ${p => (p.$light ? '#f2f2f2' : '#4a4a4a')};
    background: ${p => (p.$light ? '#f2f2f2' : '#000')};
    color: ${p => (p.$light ? '#0f0f0f' : '#fff')};
  }
`

const Body = styled.div`
  flex: 1;
  display: grid;
  grid-template-columns: 96px 1fr 84px;
  column-gap: 7px;
  padding-top: 8px;
`

const SideBar = styled.nav`
  display: flex;
  flex-direction: column;
  align-items: center;
  background: #0f0f0f;
`

const LeftBar = styled(SideBar)`
  gap: 7px;
  padding: 15px 0 41px;
  border-top-right-radius: 8px;
`

const RightBar = styled(SideBar)`
  gap: 21px;
  padding: 14px 0 13px;
  border-top-left-radius: 8px;
`

const Rule = styled.span`
  width: 66px;
  height: 2px;
  margin: 8px 0 7px;
  background: #4a4a4a;
`

const SideRule = styled.span`
  width: 61px;
  height: 2px;
  background: #4a4a4a;
`

const SideBadge = styled.span`
  position: absolute;
  top: -4px;
  left: 10px;
  padding: 0 6px;
  border-radius: 15px;
  background: #e0484c;
  color: #fff;
  font-size: 22px;
  line-height: 30px;
`

const Center = styled.main`
  display: flex;
  flex-direction: column;
  gap: 2px;
  min-width: 0;
`

const ChartFrame = styled.section`
  flex: 1;
  display: grid;
  grid-template-columns: 1fr 99px;
  grid-template-rows: 1fr 44px;
  border: 4px solid #8c8c8c;
  border-radius: 7px;
  background: #000;
  color: #d1d1d1;
  font-size: 20px;
`

const Plot = styled.div`
  position: relative;
  overflow: hidden;
`

const Canvas = styled.svg`
  position: absolute;
  inset: 0;
  width: 100%;
  height: 100%;
`

const LineLabel = styled.span`
  position: absolute;
  top: ${p => yPct(p.$y)};
  right: calc(100% - ${p => xPct(p.$x)});
  transform: translateY(-55%);
  color: ${p => p.$color || '#fff'};
  font-size: ${p => (p.$small ? 20 : 26)}px;
  font-weight: ${p => (p.$bold ? 700 : 400)};
  white-space: nowrap;
`

const Note = styled.span`
  position: absolute;
  top: ${p => yPct(p.$y)};
  left: ${p => xPct(p.$x)};
  transform: translate(-50%, -55%);
  color: ${p => p.$color};
  font-size: ${p => p.$size}px;
  font-weight: ${p => (p.$bold ? 700 : 400)};
`

const Mark = styled(Note)`
  color: #bfe9f0;
  font-family: 'Noto Sans CJK JP', sans-serif;
  font-size: 30px;
  font-weight: 500;
  line-height: 30px;
`

const Legend = styled.div`
  position: absolute;
  top: 10px;
  left: 14px;
  display: flex;
  align-items: center;
  gap: 16px;
  color: #dbdbdb;
  font-size: 28px;
  line-height: 34px;
`

const Status = styled.span`
  width: 33px;
  height: 33px;
  border: 9px solid #122220;
  border-radius: 50%;
  background: #6cbdb0;
`

const PriceAxis = styled.div`
  position: relative;
  border-left: 2px solid #787878;
`

const PriceTicks = styled.div`
  position: absolute;
  inset: 0;
  display: flex;
  flex-direction: column;
  overflow: hidden;

  span {
    flex: 1;
    display: flex;
    align-items: center;
    padding: 0 0 2px 13px;
  }
  span:first-child {
    margin-top: -3px;
  }
  span:last-child {
    margin-bottom: -15px;
  }
`

const PriceTag = styled.div`
  position: absolute;
  top: ${yPct(914)};
  right: 4px;
  display: flex;
  align-items: center;
  gap: 16px;
  width: 128px;
  height: 34px;
  padding-left: 3px;
  transform: translateY(-50%);
  border-radius: 4px;
  background: #363845;
  color: #fff;
`

const TimeAxis = styled.div`
  position: relative;
  min-width: 0;
  border-top: 2px solid #787878;
`

const DayTicks = styled.div`
  display: flex;
  height: 100%;
  overflow: hidden;
`

const Day = styled.span`
  flex: 1 0 0;
  min-width: 0;
  display: flex;
  align-items: center;
  justify-content: center;
  font-weight: ${p => (p.$bold ? 700 : 400)};
  white-space: nowrap;

  &:first-child {
    margin-left: -46px;
  }
  &:last-child {
    margin-right: -21px;
  }
`

const TimeTag = styled.span`
  position: absolute;
  top: 0;
  left: ${xPct(3011)};
  width: 195px;
  transform: translateX(-50%);
  border-radius: 0 0 4px 4px;
  background: #363845;
  color: #fff;
  line-height: 39px;
  text-align: center;
`

const AxisCorner = styled.button`
  display: flex;
  align-items: center;
  justify-content: center;
  && {
    border-top: 2px solid #787878;
    border-left: 2px solid #787878;
  }
`

const BottomBar = styled.footer`
  display: flex;
  align-items: center;
  gap: 8px;
  height: 70px;
  padding: 0 11px 0 20px;
  border-radius: 8px 8px 0 0;
  background: #0f0f0f;
`

const SpanRow = styled(Row)`
  gap: 8px;
`

const Favorites = styled.div`
  display: flex;
  align-items: center;
  height: 70px;
  margin-right: 88px;
  padding-right: 2px;
  border-radius: 11px;
  background: #1f1f1f;
`

const Grip = styled.svg`
  width: 46px;
  height: 52px;
  fill: #5a5a5a;
`
